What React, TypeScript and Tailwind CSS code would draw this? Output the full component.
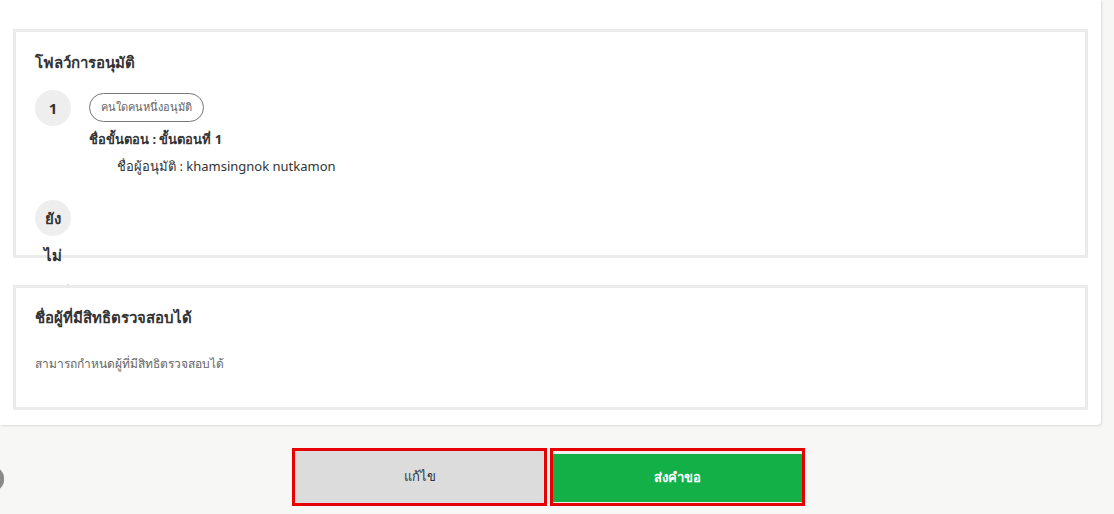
import React from "react";

const font = { fontFamily: '"Noto Sans", "DejaVu Sans", sans-serif' };

const Panel = ({ children, className = "" }: { children: React.ReactNode; className?: string }) => (
    <div className={`border-[3px] border-[#ebebeb] bg-white px-[19px] ${className}`}>{children}</div>
);

const StepCircle = ({ children }: { children: React.ReactNode }) => (
    <div className="flex-shrink-0 w-9 h-9 rounded-full bg-[#eeeeee] flex justify-center">
        <span className="block text-center text-[15px] font-bold text-[#333] leading-[37px] whitespace-pre-line">
            {children}
        </span>
    </div>
);

export default function App() {
    return (
        <div className="relative w-[1114px] h-[514px] overflow-hidden bg-[#f7f7f5]" style={font}>
            {/* Main card */}
            <div className="w-[1101px] bg-white rounded-br-[4px] shadow-[1px_1px_2px_rgba(0,0,0,0.12)] px-[13px] pt-[29px] pb-[15px] flex flex-col gap-[27px]">
                {/* Approval flow */}
                <Panel className="pt-[19px] pb-[19px]">
                    <h2 className="text-[15px] font-bold text-[#333] leading-[22px]">โฟลว์การอนุมัติ</h2>

                    <div className="mt-[17px] flex gap-[18px]">
                        <StepCircle>1</StepCircle>
                        <div className="flex flex-col items-start">
                            <span className="mt-[3px] h-[29px] px-[11px] rounded-full border border-[#777] text-[11px] text-[#666] flex items-center">
                                คนใดคนหนึ่งอนุมัติ
                            </span>
                            <p className="mt-[7px] text-[13px] font-bold text-[#333] leading-[20px]">
                                ชื่อขั้นตอน : ขั้นตอนที่ 1
                            </p>
                            <p className="mt-[7px] ml-7 text-[13px] text-[#333] leading-[20px]">
                                ชื่อผู้อนุมัติ : khamsingnok nutkamon
                            </p>
                        </div>
                    </div>

                    <div className="mt-[24px] flex">
                        <StepCircle>{"ยัง\nไม่\nอนุมัติ"}</StepCircle>
                    </div>
                </Panel>

                {/* Reviewers */}
                <Panel className="relative pt-[18px] pb-[34px]">
                    <h2 className="text-[15px] font-bold text-[#333] leading-[22px]">ชื่อผู้ที่มีสิทธิตรวจสอบได้</h2>
                    <p className="mt-[27px] text-[12px] text-[#666] leading-[18px]">สามารถกำหนดผู้ที่มีสิทธิตรวจสอบได้</p>
                </Panel>
            </div>

            {/* Actions */}
            <div className="w-[1101px] pr-1 mt-[23px] flex justify-center gap-[3px]">
                <div className="border-[3px] border-[#e60000]">
                    <button className="w-[249px] h-[52px] bg-[#dcdcdc] text-[13px] text-[#333]">แก้ไข</button>
                </div>
                <div className="border-[3px] border-[#e60000]">
                    <button className="w-[249px] h-[52px] bg-[#12b046] border-t-[3px] border-b border-[#eef3ef] text-[13px] font-semibold text-white">
                        ส่งคำขอ
                    </button>
                </div>
            </div>

            {/* Floating button peeking at the left edge */}
            <div className="absolute left-[-18px] top-[467px] w-[22px] h-[24px] rounded-full bg-[#8a8a8a]" />
        </div>
    );
}
